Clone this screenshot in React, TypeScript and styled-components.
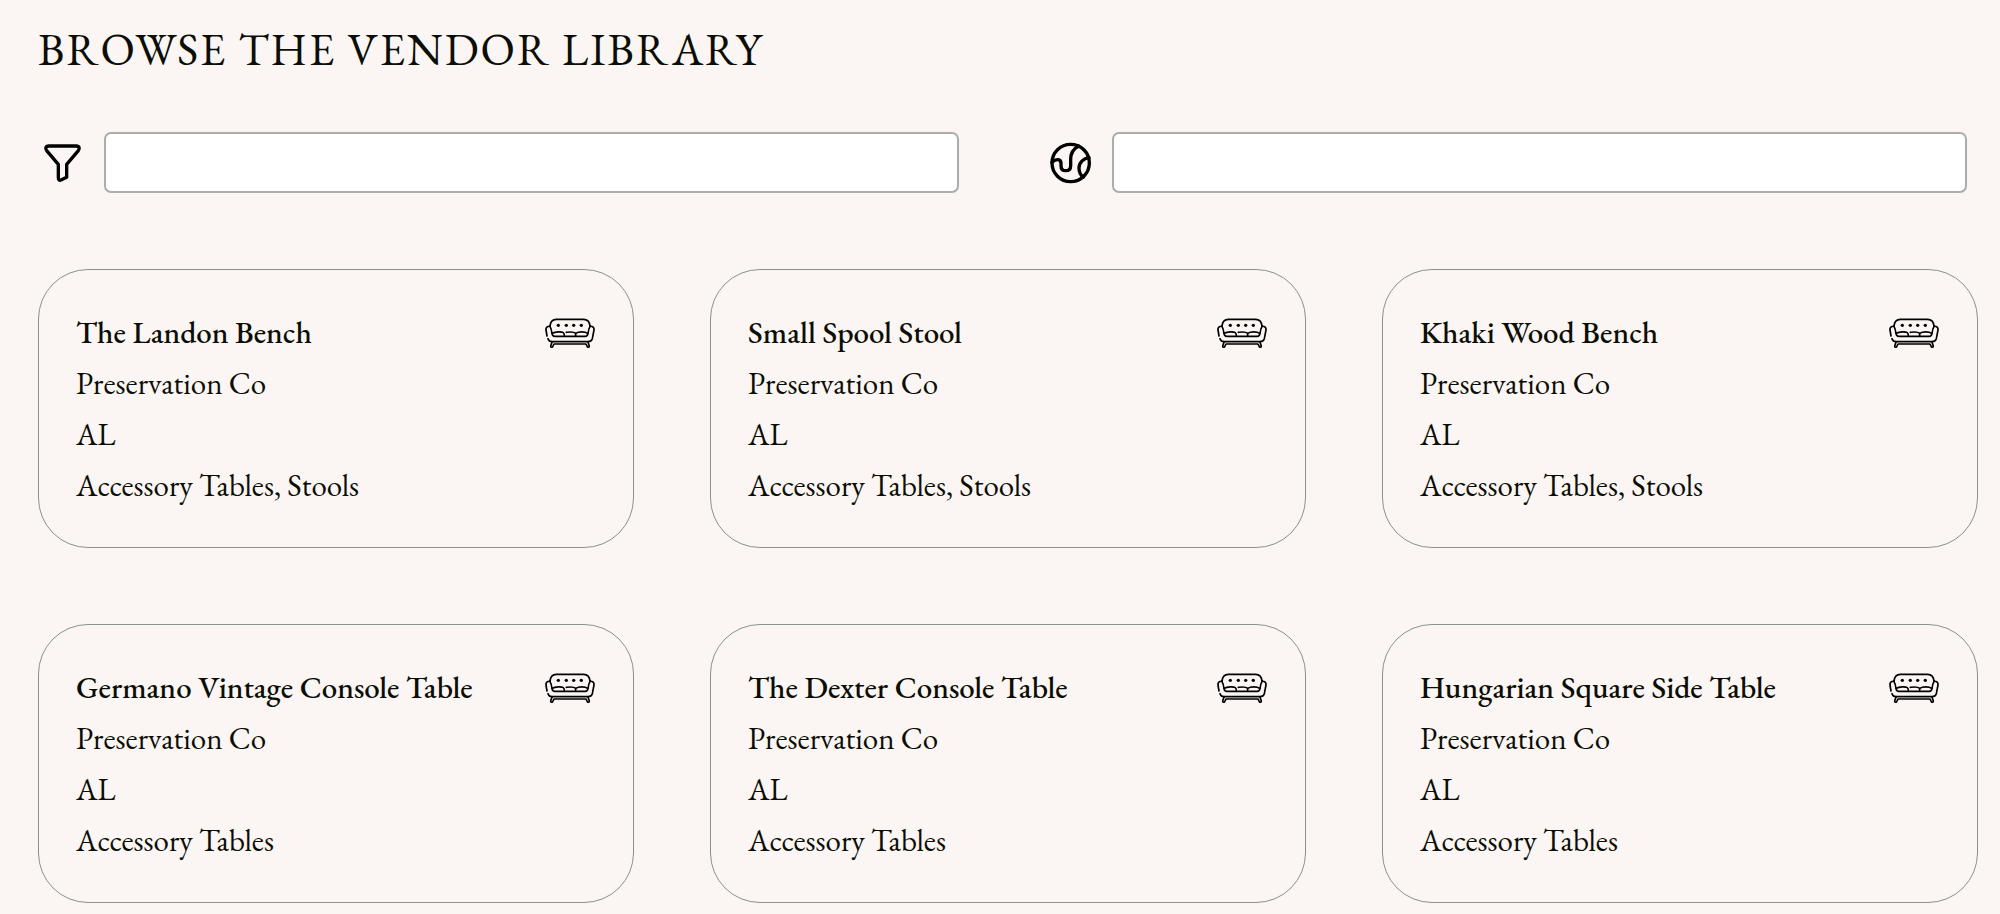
import React from "react";
import styled, { createGlobalStyle } from "styled-components";

const GlobalStyle = createGlobalStyle`
  *, *::before, *::after { box-sizing: border-box; }
  body {
    margin: 0;
    background: #fbf6f3;
    color: #0b0e06;
    font-family: "EB Garamond", "Liberation Serif", serif;
  }
`;

const Page = styled.main`
  padding: 24px 22px 11px 38px;
`;

const Heading = styled.h1`
  margin: 0 0 58px;
  font-size: 45px;
  font-weight: 400;
  line-height: 50px;
  letter-spacing: 2px;
  text-transform: uppercase;
`;

const Filters = styled.form`
  display: grid;
  grid-template-columns: repeat(2, minmax(0, 1fr));
  column-gap: 87px;
  margin: 0 11px 76px 0;
`;

const Field = styled.div`
  display: flex;
  align-items: center;
  gap: 17px;
`;

const FieldLabel = styled.label`
  display: flex;
  flex: none;
`;

const FieldInput = styled.input`
  flex: 1;
  min-width: 0;
  height: 61px;
  padding: 0 16px;
  border: 2px solid #acacac;
  border-radius: 7px;
  background: #fff;
  color: inherit;
  font: inherit;
  font-size: 31px;
`;

const LineIcon = styled.svg`
  width: 49px;
  height: 48px;
  fill: none;
  stroke: #000;
  stroke-width: 10;
  stroke-linecap: round;
  stroke-linejoin: round;
`;

const Cards = styled.ul`
  display: grid;
  grid-template-columns: repeat(3, minmax(0, 1fr));
  gap: 76px;
  margin: 0;
  padding: 0;
  list-style: none;
`;

const Card = styled.li`
  padding: 37px 37px 36px;
  border: 1px solid #89928b;
  border-radius: 50px;
`;

const CardHeader = styled.div`
  display: flex;
  align-items: center;
  justify-content: space-between;
  gap: 16px;
`;

const CardTitle = styled.h2`
  margin: 0;
  font-size: 31px;
  font-weight: 500;
  line-height: 51px;
`;

const CardText = styled.p`
  margin: 0;
  font-size: 31px;
  line-height: 51px;
`;

const SofaSvg = styled.svg`
  flex: none;
  width: 51px;
  height: 30px;
  fill: none;
  stroke: #000;
  stroke-width: 5;
  stroke-linecap: round;
  stroke-linejoin: round;
`;

const FunnelIcon = () => (
  <LineIcon viewBox="25 56 147 144" aria-hidden="true">
    <path d="M57 77H140C149 77 151 85 146 91L111 132V171L94 179C89 181 86 178 86 173V132L51 91C46 85 48 77 57 77Z" />
  </LineIcon>
);

const GlobeIcon = () => (
  <LineIcon viewBox="48 55 147 144" aria-hidden="true">
    <circle cx="122" cy="127" r="56" />
    <path d="M66 125C72 120 77 117 82 117C90 117 93 121 93 128V135C93 144 98 150 107 150C117 150 122 144 122 135V116C122 98 131 84 146 76" />
    <path d="M177 111C160 113 147 126 147 142C147 154 152 164 160 169" />
  </LineIcon>
);

const SofaIcon = () => (
  <SofaSvg viewBox="45 51 153 90" aria-hidden="true">
    <path d="M60 76C61 62 67 55 79 55H161C173 55 179 62 180 76" />
    <path d="M60 76C52 75 47 79 48 87L51 105M54 113C56 119 60 122 66 122H174C181 122 185 119 187 113L192 87C193 79 188 75 180 76" />
    <path d="M60 76C63 81 65 90 66 98C67 103 69 106 74 106H166C171 106 173 103 174 98C175 90 177 81 180 76" />
    <path d="M67 97C76 92 94 91 100 95Q103 97 103 104M109 94C118 93 131 91 137 97V104M137 97C146 91 165 91 173 97" />
    <path d="M66 123L62 136C62 139 66 140 68 137L72 129H168L172 137C174 140 178 139 178 136L174 123" />
    <g fill="#000" stroke="none">
      <circle cx="85" cy="73" r="5" />
      <circle cx="109" cy="73" r="5" />
      <circle cx="131" cy="73" r="5" />
      <circle cx="154" cy="73" r="5" />
    </g>
  </SofaSvg>
);

interface Product {
  name: string;
  vendor: string;
  state: string;
  categories: string;
}

const products: Product[] = [
  { name: "The Landon Bench", vendor: "Preservation Co", state: "AL", categories: "Accessory Tables, Stools" },
  { name: "Small Spool Stool", vendor: "Preservation Co", state: "AL", categories: "Accessory Tables, Stools" },
  { name: "Khaki Wood Bench", vendor: "Preservation Co", state: "AL", categories: "Accessory Tables, Stools" },
  { name: "Germano Vintage Console Table", vendor: "Preservation Co", state: "AL", categories: "Accessory Tables" },
  { name: "The Dexter Console Table", vendor: "Preservation Co", state: "AL", categories: "Accessory Tables" },
  { name: "Hungarian Square Side Table", vendor: "Preservation Co", state: "AL", categories: "Accessory Tables" },
];

export default function App() {
  return (
    <>
      <GlobalStyle />
      <Page>
        <Heading>Browse the Vendor Library</Heading>
        <Filters>
          <Field>
            <FieldLabel htmlFor="category">
              <FunnelIcon />
            </FieldLabel>
            <FieldInput id="category" type="text" aria-label="Category" />
          </Field>
          <Field>
            <FieldLabel htmlFor="location">
              <GlobeIcon />
            </FieldLabel>
            <FieldInput id="location" type="text" aria-label="Location" />
          </Field>
        </Filters>
        <Cards>
          {products.map((product) => (
            <Card key={product.name}>
              <CardHeader>
                <CardTitle>{product.name}</CardTitle>
                <SofaIcon />
              </CardHeader>
              <CardText>{product.vendor}</CardText>
              <CardText>{product.state}</CardText>
              <CardText>{product.categories}</CardText>
            </Card>
          ))}
        </Cards>
      </Page>
    </>
  );
}
